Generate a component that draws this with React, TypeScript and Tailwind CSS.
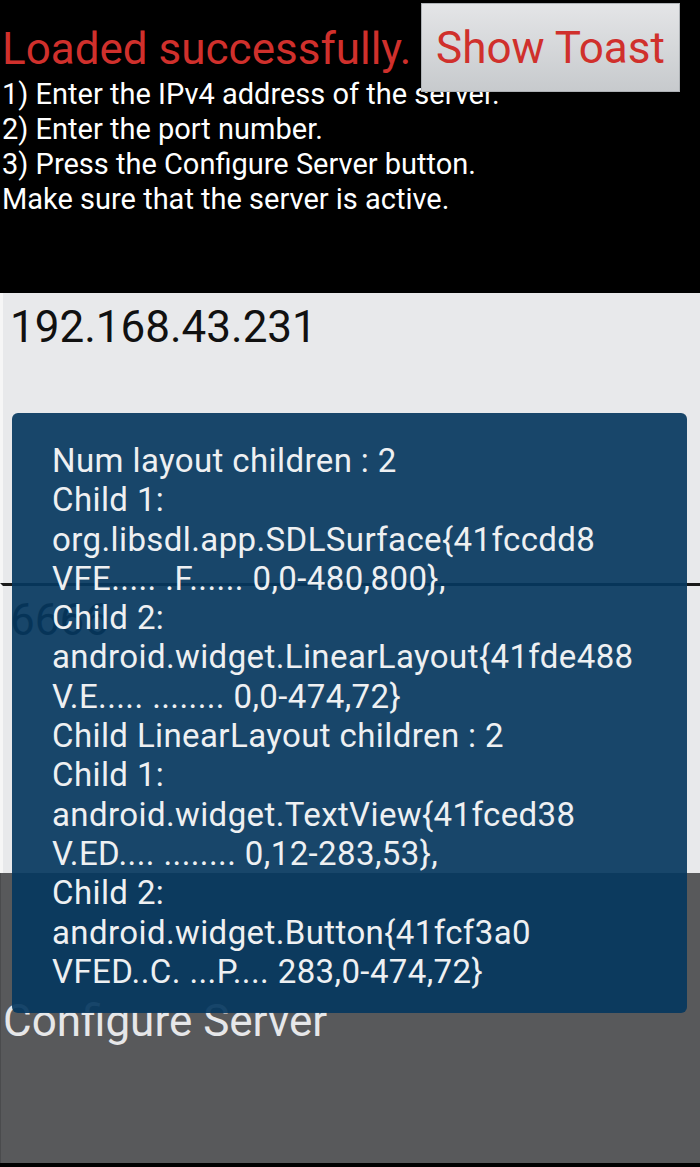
const toastLines = [
  "Num layout children : 2",
  "Child 1:",
  "org.libsdl.app.SDLSurface{41fccdd8",
  "VFE..... .F...... 0,0-480,800},",
  "Child 2:",
  "android.widget.LinearLayout{41fde488",
  "V.E..... ........ 0,0-474,72}",
  "Child LinearLayout children : 2",
  "Child 1:",
  "android.widget.TextView{41fced38",
  "V.ED.... ........ 0,12-283,53},",
  "Child 2:",
  "android.widget.Button{41fcf3a0",
  "VFED..C. ...P.... 283,0-474,72}",
];

const App = () => {
  return (
    <div className="relative w-[700px] h-[1167px] bg-black overflow-hidden font-['Roboto',sans-serif]">
      {/* status row */}
      <div className="relative h-[80px] flex items-end">
        <span className="text-[#d0302c] text-[44px] leading-[48px] pl-[2px] pb-[7px]">
          Loaded successfully.
        </span>
        {/* button hangs over the first line below */}
        <button className="absolute left-[421px] top-[3px] w-[259px] h-[89px] z-10 bg-gradient-to-b from-[#e4e5e7] to-[#c7cacd] border border-[#aeb2b6] text-[#d0302c] text-[44px] leading-none">
          Show Toast
        </button>
      </div>

      <div className="text-white text-[29px] leading-[35px] pl-[2px] -mt-[3px]">
        <p>1) Enter the IPv4 address of the server.</p>
        <p>2) Enter the port number.</p>
        <p>3) Press the Configure Server button.</p>
        <p>Make sure that the server is active.</p>
      </div>

      <div className="mt-[76px] flex flex-col">
        <div className="h-[290px] bg-[#e8e9eb] border-l-[3px] border-[#f6f6f6] px-[7px] pt-[8px]">
          <span className="text-[44px] leading-[52px] text-[#111]">192.168.43.231</span>
        </div>
        <div className="h-[290px] bg-[#e8e9eb] border-t-[3px] border-[#1a1a1a] border-l-[3px] border-l-[#f6f6f6] px-[7px] pt-[8px]">
          <span className="text-[44px] leading-[52px] text-[#111]">6666</span>
        </div>
        <div className="h-[290px] bg-[#58595b] border-l border-[#4a4b4d] flex items-center">
          <span className="text-[#e6e7e9] text-[44px] leading-[52px] pl-[2px] pt-[6px]">Configure Server</span>
        </div>
      </div>

      {/* toast overlay */}
      <div className="absolute left-[12px] top-[413px] w-[675px] h-[600px] rounded-[6px] bg-[rgba(5,55,94,0.92)] pl-[40px] pt-[28px] text-[#eef0f2] text-[33px] leading-[39.3px] tracking-[0.4px]">
        {toastLines.map((line, i) => (
          <div key={i} className="whitespace-pre">{line}</div>
        ))}
      </div>
    </div>
  );
};

export default App;
